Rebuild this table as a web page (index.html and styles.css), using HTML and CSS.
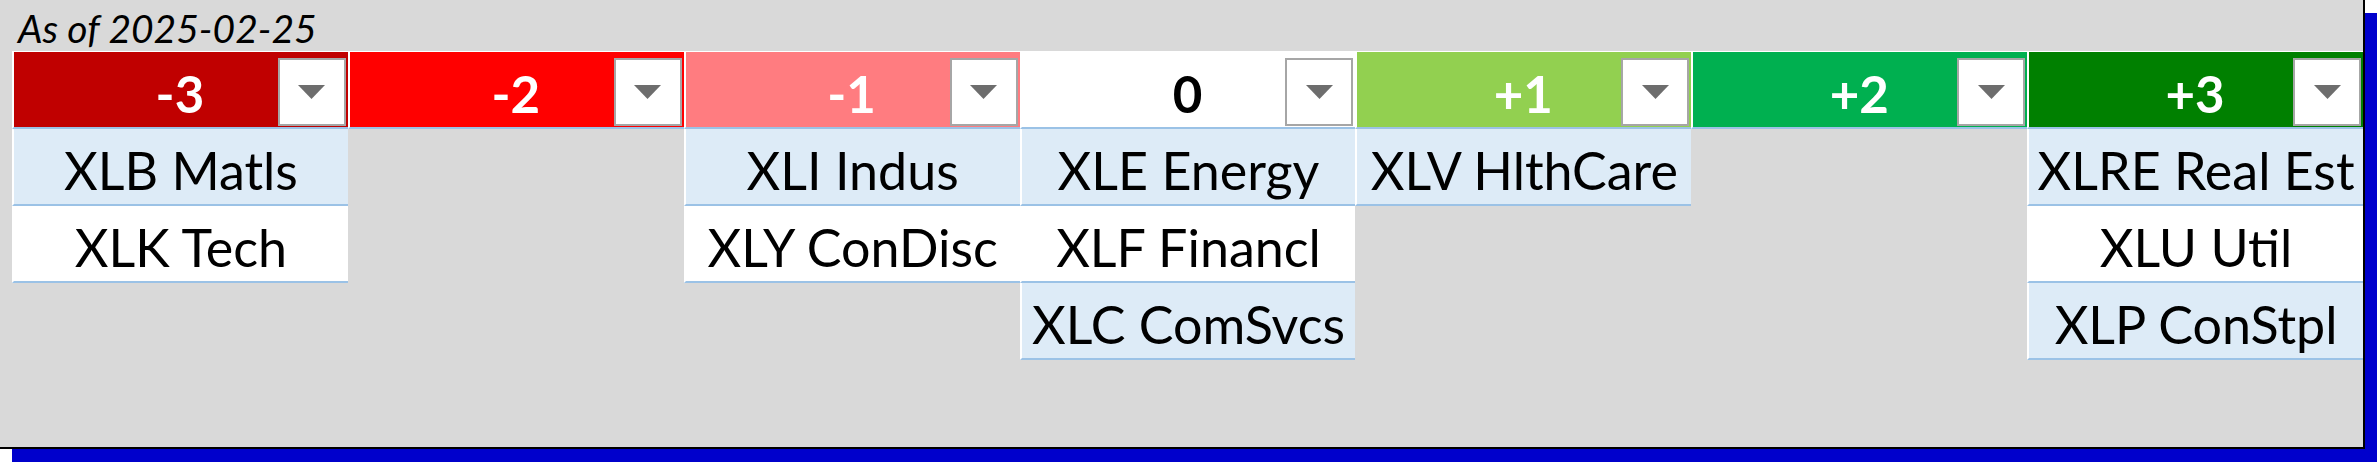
FILE: index.html
```html
<!DOCTYPE html>
<html lang="en">
<head>
<meta charset="utf-8">
<title>Sector ranking</title>
<link rel="stylesheet" href="styles.css">
</head>
<body>
<div class="page">
<div class="frame">
  <div class="title">As of 2025-02-25</div>
  <div class="board">
    <div class="col">
      <div class="head h-m3"><span class="val">-3</span><span class="dd"><svg viewBox="0 0 27 14" width="27" height="14"><polygon points="0,0 27,0 13.5,14" /></svg></span></div>
      <div class="cell band">XLB Matls</div>
      <div class="cell">XLK Tech</div>
    </div>
    <div class="col">
      <div class="head h-m2"><span class="val">-2</span><span class="dd"><svg viewBox="0 0 27 14" width="27" height="14"><polygon points="0,0 27,0 13.5,14" /></svg></span></div>
    </div>
    <div class="col">
      <div class="head h-m1"><span class="val">-1</span><span class="dd"><svg viewBox="0 0 27 14" width="27" height="14"><polygon points="0,0 27,0 13.5,14" /></svg></span></div>
      <div class="cell band">XLI Indus</div>
      <div class="cell">XLY ConDisc</div>
    </div>
    <div class="col">
      <div class="head h-0"><span class="val">0</span><span class="dd"><svg viewBox="0 0 27 14" width="27" height="14"><polygon points="0,0 27,0 13.5,14" /></svg></span></div>
      <div class="cell band">XLE Energy</div>
      <div class="cell">XLF Financl</div>
      <div class="cell band">XLC ComSvcs</div>
    </div>
    <div class="col">
      <div class="head h-p1"><span class="val">+1</span><span class="dd"><svg viewBox="0 0 27 14" width="27" height="14"><polygon points="0,0 27,0 13.5,14" /></svg></span></div>
      <div class="cell band">XLV HlthCare</div>
    </div>
    <div class="col">
      <div class="head h-p2"><span class="val">+2</span><span class="dd"><svg viewBox="0 0 27 14" width="27" height="14"><polygon points="0,0 27,0 13.5,14" /></svg></span></div>
    </div>
    <div class="col">
      <div class="head h-p3"><span class="val">+3</span><span class="dd"><svg viewBox="0 0 27 14" width="27" height="14"><polygon points="0,0 27,0 13.5,14" /></svg></span></div>
      <div class="cell band">XLRE Real Est</div>
      <div class="cell">XLU Util</div>
      <div class="cell band">XLP ConStpl</div>
    </div>
  </div>
</div>
</div>
</body>
</html>
```

FILE: styles.css
```css
html, body {
  margin: 0;
  padding: 0;
  background: #ffffff;
}

.page {
  width: 2377px;
  height: 462px;
  overflow: hidden;
}

.frame {
  width: 2365px;
  height: 449px;
  box-sizing: border-box;
  background: #d9d9d9;
  border-right: 2px solid #000000;
  border-bottom: 2px solid #000000;
  box-shadow: 12px 13px 0 #0000cc;
  padding: 5px 0 0 12px;
  font-family: "Lato", "Open Sans", sans-serif;
  color: #000000;
}

.title {
  height: 46px;
  line-height: 46px;
  font-size: 39px;
  font-style: italic;
  padding-left: 6px;
  white-space: nowrap;
}

.board {
  display: grid;
  grid-template-columns: repeat(7, 1fr);
}

.col {
  display: flex;
  flex-direction: column;
  min-width: 0;
}

.head {
  height: 78px;
  box-sizing: border-box;
  border-top: 1px solid #ffffff;
  border-left: 2px solid #ffffff;
  border-bottom: 2px solid #9bc2e6;
  padding: 6px 2px 1px 0;
  display: grid;
  grid-template-columns: 68px 1fr 68px;
  align-items: center;
  color: #ffffff;
  font-weight: 700;
  font-size: 51px;
  line-height: 1;
}

.val {
  grid-column: 2;
  text-align: center;
  padding-top: 2px;
}

.dd {
  grid-column: 3;
  width: 68px;
  height: 68px;
  box-sizing: border-box;
  background: #ffffff;
  border: 2px solid #a6a6a6;
  display: flex;
  align-items: center;
  justify-content: center;
}

.dd svg {
  display: block;
  fill: #6d6d6d;
}

.h-m3 { background: #c00000; }
.h-m2 { background: #ff0000; }
.h-m1 { background: #ff7c80; }
.h-0 { background: #ffffff; color: #000000; }
.h-p1 { background: #92d050; }
.h-p2 { background: #00b050; }
.h-p3 { background: #008000; }

.cell {
  height: 77px;
  box-sizing: border-box;
  border-left: 2px solid #ffffff;
  border-bottom: 2px solid #9bc2e6;
  background: #ffffff;
  display: flex;
  align-items: center;
  justify-content: center;
  padding-top: 7px;
  font-size: 52px;
  line-height: 1;
  white-space: nowrap;
}

.cell.band {
  background: #ddebf7;
}
```
